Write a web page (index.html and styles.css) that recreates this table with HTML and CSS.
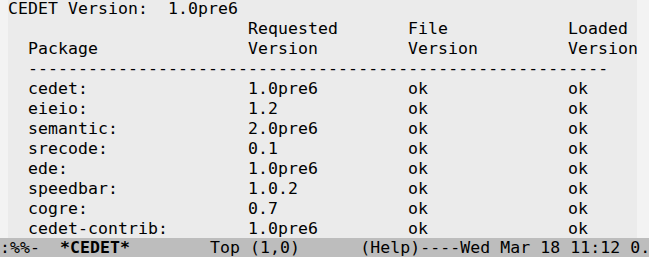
FILE: index.html
```html
<!DOCTYPE html>
<html lang="en">
<head>
    <meta charset="UTF-8">
    <title>*CEDET*</title>
    <link rel="stylesheet" href="styles.css">
</head>
<body>
    <div class="frame">
        <div class="window">
            <div class="fringe left"></div>
            <div class="buffer">
                <div class="lines">
                    <div class="line">CEDET Version:  1.0pre6</div>

                    <div class="row head">
                        <span></span>
                        <span>Requested</span>
                        <span>File</span>
                        <span>Loaded</span>
                    </div>
                    <div class="row head">
                        <span>Package</span>
                        <span>Version</span>
                        <span>Version</span>
                        <span>Version</span>
                    </div>
                    <div class="rule">----------------------------------------------------------</div>

                    <div class="row"><span>cedet:</span><span>1.0pre6</span><span>ok</span><span>ok</span></div>
                    <div class="row"><span>eieio:</span><span>1.2</span><span>ok</span><span>ok</span></div>
                    <div class="row"><span>semantic:</span><span>2.0pre6</span><span>ok</span><span>ok</span></div>
                    <div class="row"><span>srecode:</span><span>0.1</span><span>ok</span><span>ok</span></div>
                    <div class="row"><span>ede:</span><span>1.0pre6</span><span>ok</span><span>ok</span></div>
                    <div class="row"><span>speedbar:</span><span>1.0.2</span><span>ok</span><span>ok</span></div>
                    <div class="row"><span>cogre:</span><span>0.7</span><span>ok</span><span>ok</span></div>
                    <div class="row"><span>cedet-contrib:</span><span>1.0pre6</span><span>ok</span><span>ok</span></div>
                </div>
            </div>
            <div class="fringe right"></div>
        </div>

        <div class="mode-line"><span>:%%-  </span><b>*CEDET*</b><span>        Top (1,0)      (Help)----Wed Mar 18 11:12 0.</span></div>
    </div>
</body>
</html>
```

FILE: styles.css
```css
* {
    margin: 0;
    padding: 0;
    box-sizing: border-box;
}

body {
    width: 649px;
    height: 257px;
    overflow: hidden;
    background-color: #f2f2f2;
    color: #000;
    font-family: "DejaVu Sans Mono", monospace;
    font-size: 16.5px;
    letter-spacing: 0.07px;
    line-height: 20px;
}

.frame {
    display: flex;
    flex-direction: column;
    height: 257px;
}

.window {
    display: flex;
    height: 238px;
    flex-shrink: 0;
}

.fringe {
    background-color: #f3f3f3;
}

.fringe.left {
    width: 8px;
}

.fringe.right {
    width: 12px;
}

.buffer {
    flex: 1;
    overflow: hidden;
    background-color: #ebebeb;
}

.lines {
    margin-top: -1px;
    width: 700px;
}

.line, .row, .rule {
    height: 20px;
    white-space: pre;
}

.row {
    display: grid;
    grid-template-columns: 220px 160px 160px 1fr;
    padding-left: 20px;
}

.rule {
    padding-left: 20px;
}

.mode-line {
    height: 20px;
    flex-shrink: 0;
    background-color: #bdbdbd;
    white-space: pre;
    overflow: hidden;
}

.mode-line b {
    font-weight: bold;
}
```
